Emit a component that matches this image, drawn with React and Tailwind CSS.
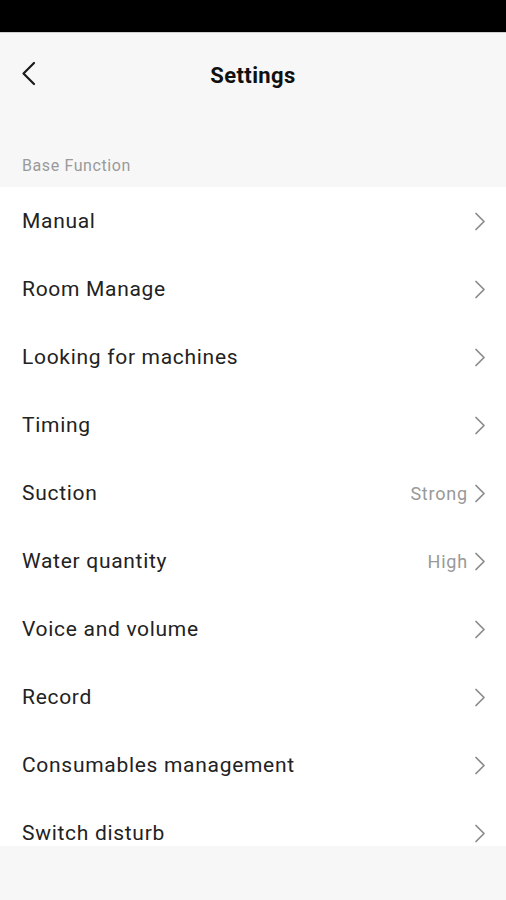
import { useState } from "react"

const rows = [
    { label: "Manual" },
    { label: "Room Manage" },
    { label: "Looking for machines" },
    { label: "Timing" },
    { label: "Suction", value: "Strong" },
    { label: "Water quantity", value: "High" },
    { label: "Voice and volume" },
    { label: "Record" },
    { label: "Consumables management" },
    { label: "Switch disturb" },
]

function Chevron({ left }) {
    return (
        <svg width={left ? 15 : 12} height={left ? 25 : 19} viewBox={left ? "0 0 15 25" : "0 0 12 19"} fill="none">
            {left ? (
                <path d="M13 2 L2.5 12.5 L13 23" stroke="#1a1a1a" strokeWidth="2.2" strokeLinecap="round" strokeLinejoin="round" />
            ) : (
                <path d="M2 1.5 L10 9.5 L2 17.5" stroke="#8a8a8a" strokeWidth="1.7" strokeLinecap="round" strokeLinejoin="round" />
            )}
        </svg>
    )
}

export default function App() {
    const [items] = useState(rows)

    return (
        <div className="flex flex-col h-[900px] w-full overflow-hidden bg-[#f7f7f7]" style={{ fontFamily: "Roboto, 'Noto Sans', sans-serif" }}>
            <div className="h-[33px] bg-black border-b border-[#cfcfcf] shrink-0"></div>
            <div className="relative flex items-center justify-center h-[82px] shrink-0">
                <button className="absolute left-[21px] top-[28px]">
                    <Chevron left />
                </button>
                <h1 className="text-[22px] font-bold text-[#111] leading-none tracking-[0.4px] mt-[3px]">Settings</h1>
            </div>
            <div className="h-[72px] shrink-0 flex items-end pb-[9px] px-[22px]">
                <span className="text-[16px] text-[#9a9a9a] tracking-[0.6px]">Base Function</span>
            </div>
            <div className="flex-1 overflow-hidden bg-white min-h-0">
                {items.map((row) => (
                    <div key={row.label} className="flex items-center justify-between h-[68px] pl-[22px] pr-[20px]">
                        <span className="text-[21px] text-[#222] tracking-[0.7px] pt-[2px]">{row.label}</span>
                        <div className="flex items-center gap-[6px]">
                            {row.value && <span className="text-[18px] text-[#999] tracking-[0.8px]">{row.value}</span>}
                            <Chevron />
                        </div>
                    </div>
                ))}
            </div>
            <div className="h-[54px] shrink-0 bg-[#f7f7f7]"></div>
        </div>
    )
}
